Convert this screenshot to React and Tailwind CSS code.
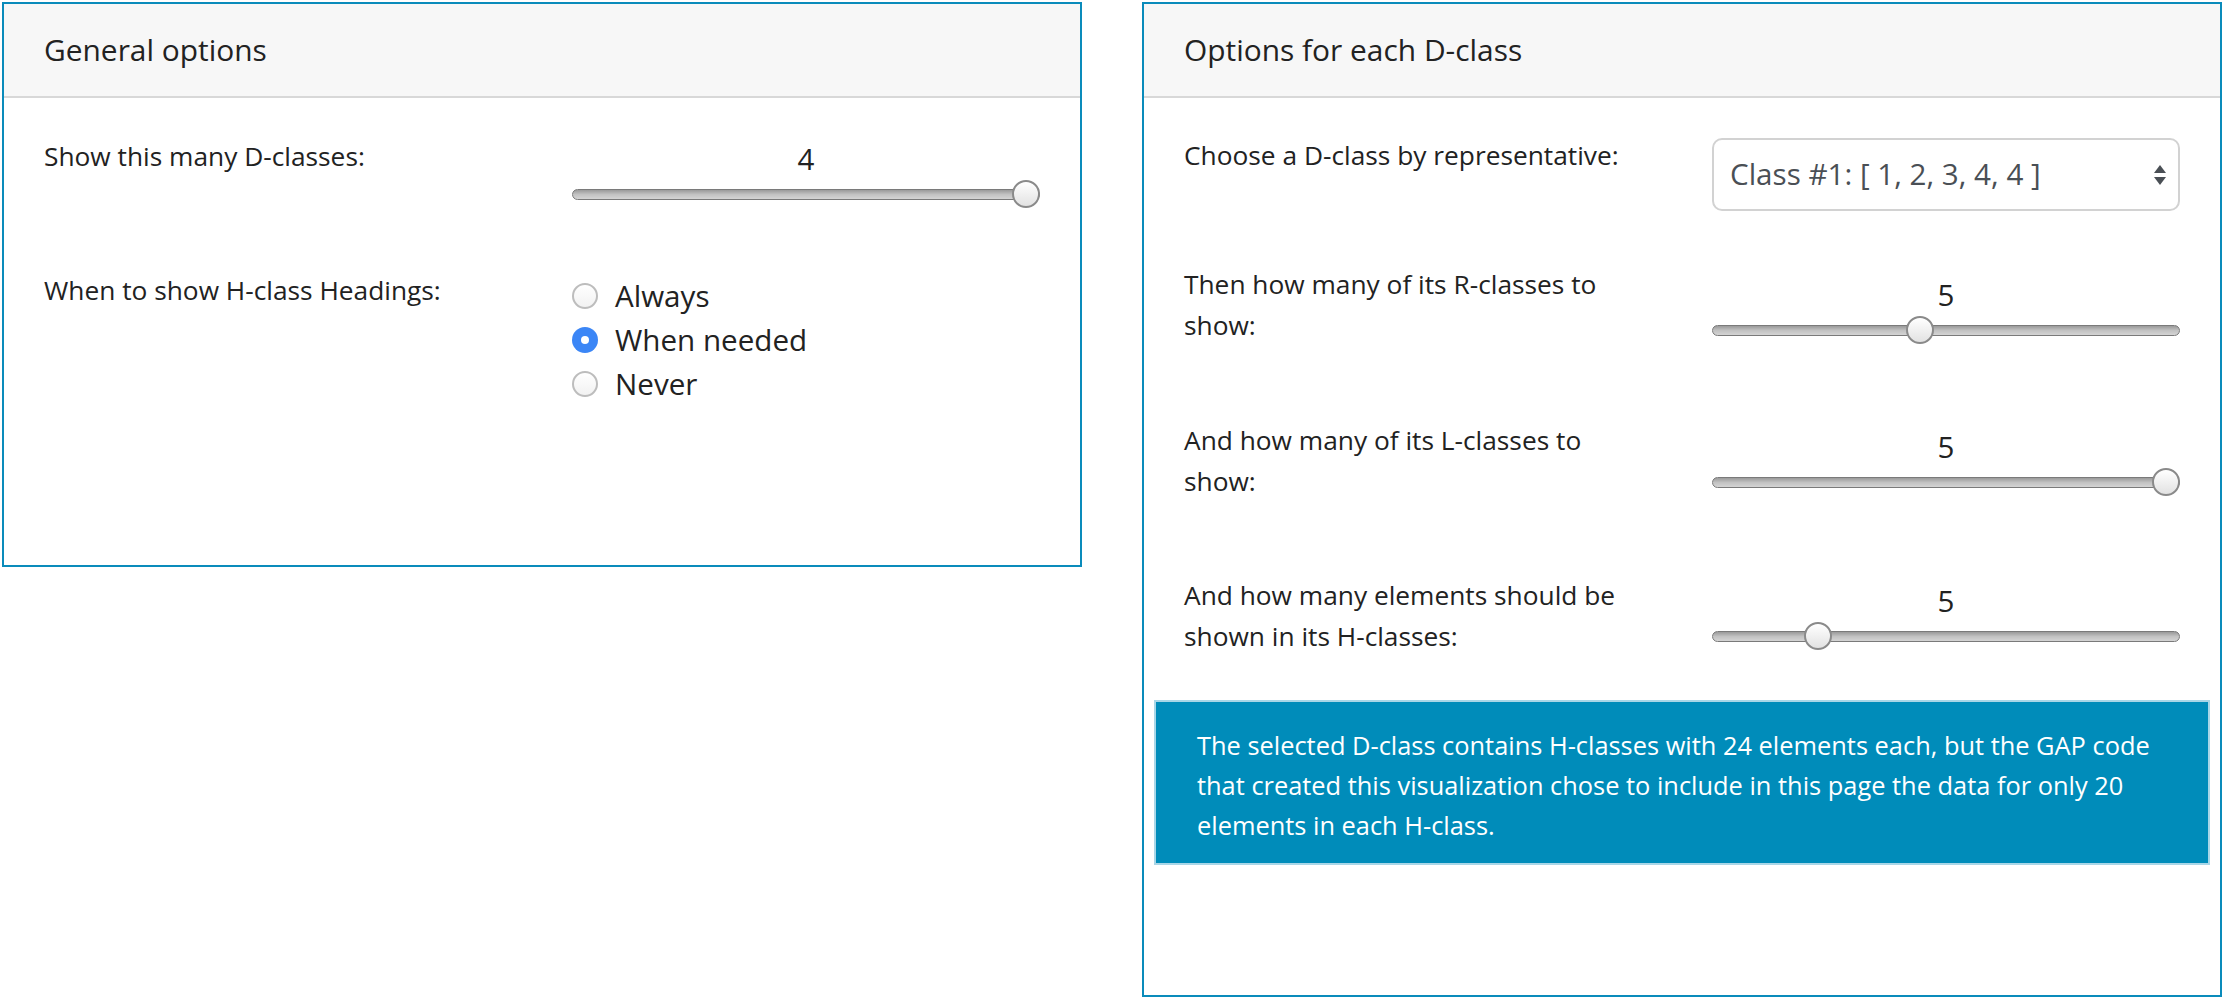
import React from 'react'

function Slider({ value, pos, pt = 'pt-[6px]' }) {
  // pos is 0..1 along the usable track
  return (
    <div className={pt}>
      <div className="h-[42px] leading-[42px] text-center text-[29.5px] text-[#222]">{value}</div>
      <div className="relative h-[28px] flex items-center">
        <div className="w-full h-[11px] rounded-full border border-[#7a7a7a] bg-linear-to-b from-[#9a9a9a] via-[#c2c2c2] to-[#d4d4d4]" />
        <div className="absolute top-0 w-[28px] h-[28px] rounded-full border-2 border-[#8a8a8a] bg-linear-to-b from-white to-[#e2e2e2]"
          style={{ left: pos * 440 }} />
      </div>
    </div>
  )
}

function Radio({ label, checked }) {
  return (
    <div className="flex items-center h-[44px] gap-[17px]">
      {checked ? (
        <span className="w-[26px] h-[26px] rounded-full bg-[#3b86f6] flex items-center justify-center">
          <span className="w-[8px] h-[8px] rounded-full bg-white" />
        </span>
      ) : (
        <span className="w-[26px] h-[26px] rounded-full border-2 border-[#bdbdbd] bg-linear-to-b from-white to-[#f2f2f2]" />
      )}
      <span className="text-[29.6px] text-[#222]">{label}</span>
    </div>
  )
}

function Panel({ title, className, children }) {
  return (
    <div className={`w-[1080px] border-2 border-[#0a8bbb] bg-white ${className}`}>
      <div className="h-[94px] bg-[#f7f7f7] border-b-2 border-[#d8d8d8] px-[40px] flex items-center text-[29.9px] text-[#222]">
        {title}
      </div>
      {children}
    </div>
  )
}

const row = 'grid grid-cols-[455px_468px] gap-x-[73px] px-[40px] items-start'
const label = 'text-[26.3px] leading-[41px] text-[#222]'

export default function App() {
  return (
    <div className="flex items-start gap-[60px] pl-[2px] pt-[2px] font-['Open_Sans',sans-serif]">
      <Panel title="General options" className="h-[565px]">
        <div className="pt-[38px]">
          <div className={`${row} mb-[62px]`}>
            <div className={label}>Show this many D-classes:</div>
            <Slider value="4" pos={1} pt="pt-[2px]" />
          </div>
          <div className={row}>
            <div className={label}>When to show H-class Headings:</div>
            <div className="pt-[4px]">
              <Radio label="Always" />
              <Radio label="When needed" checked />
              <Radio label="Never" />
            </div>
          </div>
        </div>
      </Panel>

      <Panel title="Options for each D-class" className="h-[995px]">
        <div className="pt-[37px]">
          <div className={`${row} mb-[53px]`}>
            <div className={label}>Choose a D-class by representative:</div>
            <div className="mt-[3px] h-[73px] border-2 border-[#d2d2d2] rounded-[10px] pl-[16px] pr-[10px] flex items-center justify-between">
              <span className="text-[29.6px] text-[#4a4f55]">Class #1: [ 1, 2, 3, 4, 4 ]</span>
              <svg width="14" height="24" viewBox="0 0 14 24" className="mr-[1px]">
                <path d="M7 2 L13 10 H1 Z" fill="#4a4f55" />
                <path d="M7 22 L13 14 H1 Z" fill="#4a4f55" />
              </svg>
            </div>
          </div>
          <div className={`${row} mb-[74px]`}>
            <div className={label}>Then how many of its R-classes to show:</div>
            <Slider value="5" pos={0.44} pt="pt-[10px]" />
          </div>
          <div className={`${row} mb-[73px]`}>
            <div className={label}>And how many of its L-classes to show:</div>
            <Slider value="5" pos={1} pt="pt-[6px]" />
          </div>
          <div className={`${row} mb-[43px]`}>
            <div className={label}>And how many elements should be shown in its H-classes:</div>
            <Slider value="5" pos={0.21} pt="pt-[5px]" />
          </div>
          <div className="mx-[10px] border-2 border-[#a9d6e7] bg-[#008cba] pl-[41px] pr-[41px] pt-[23px] pb-[18px] text-[25.4px] leading-[40px] text-white">
            The selected D-class contains H-classes with 24 elements each, but the GAP code that created this visualization chose to include in this page the data for only 20 elements in each H-class.
          </div>
        </div>
      </Panel>
    </div>
  )
}
